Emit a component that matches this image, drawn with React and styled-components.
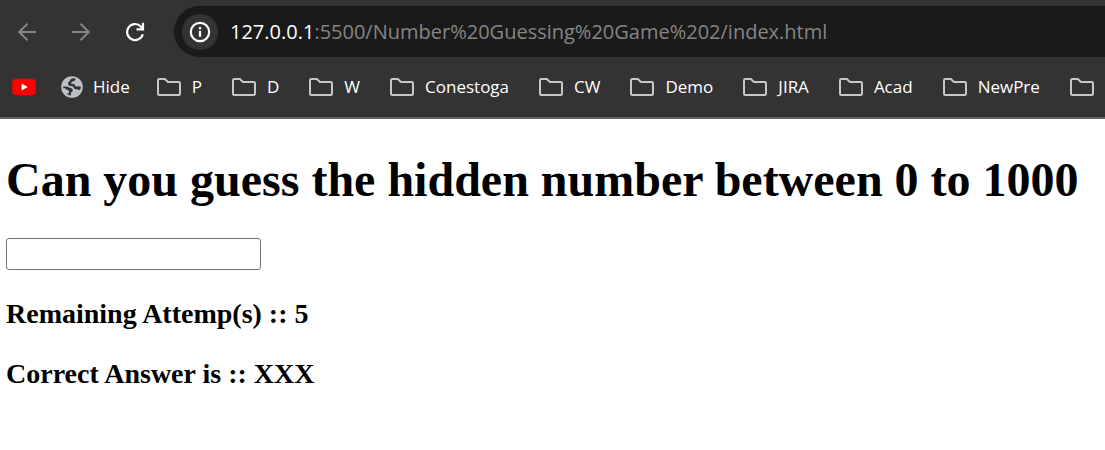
import React from "react";
import styled, { createGlobalStyle } from "styled-components";

const GlobalStyle = createGlobalStyle`
  * { box-sizing: border-box; }
  body { margin: 0; background: #fff; color: #000; overflow-x: hidden; }
`;

const Chrome = styled.header`
  background: #333333;
  border-bottom: 2px solid #656364;
  font-family: "Open Sans", "Noto Sans", sans-serif;
`;

const Toolbar = styled.div`
  display: flex;
  align-items: center;
  padding: 6px 0 0 12px;
`;

const NavButtons = styled.nav`
  display: flex;
  gap: 24px;
  margin-right: 24px;
`;

const IconButton = styled.button`
  display: flex;
  align-items: center;
  justify-content: center;
  flex: none;
  width: 30px;
  height: 30px;
  padding: 0;
  border: 0;
  background: none;
  color: ${(p) => (p.$dim ? "#868686" : "#ffffff")};
`;

const AddressBar = styled.div`
  display: flex;
  align-items: center;
  gap: 12px;
  flex: 1;
  min-width: 0;
  height: 51px;
  padding-left: 8px;
  border-radius: 26px 0 0 26px;
  background: #1a1a1a;
`;

const SiteInfo = styled(IconButton)`
  width: 36px;
  height: 36px;
  border-radius: 50%;
  background: #333333;
`;

const Url = styled.div`
  flex: 1;
  overflow: hidden;
  white-space: nowrap;
  font-size: 20px;
  line-height: 28px;
  color: #858585;
`;

const Host = styled.span`
  color: #ffffff;
`;

const Bookmarks = styled.nav`
  display: flex;
  align-items: center;
  gap: 27px;
  height: 60px;
  padding-left: 12px;
  overflow: hidden;
`;

const BookmarkGroup = styled.div`
  display: flex;
  align-items: center;
  flex: none;
  gap: ${(p) => p.$gap}px;
`;

const Bookmark = styled.a`
  display: flex;
  align-items: center;
  flex: none;
  gap: ${(p) => (p.$folder ? 11 : 10)}px;
  color: ${(p) => p.$color || "#ffffff"};
  font-size: 17px;
  line-height: 24px;
  text-decoration: none;
`;

const Page = styled.main`
  padding: 33px 6px 0;
  font-family: "Liberation Serif", "Times New Roman", serif;
`;

const Title = styled.h1`
  margin: 0 0 31px;
  font-size: 48px;
  line-height: 55px;
`;

const GuessInput = styled.input`
  display: block;
  width: 255px;
  height: 32px;
  padding: 2px 4px;
  border: 1px solid #767676;
  border-radius: 3px;
  background: #fff;
  font: 20px "Liberation Sans", Arial, sans-serif;
`;

const Status = styled.h3`
  margin: 28px 0 0;
  font-size: 28px;
  line-height: 32px;
`;

const BackIcon = () => (
  <svg width="20" height="20" viewBox="0 0 20 20" fill="none" stroke="currentColor" strokeWidth="2">
    <path d="M19 10H2.5M10.5 1.7L2.2 10l8.3 8.3" />
  </svg>
);

const ForwardIcon = () => (
  <svg width="20" height="20" viewBox="0 0 20 20" fill="none" stroke="currentColor" strokeWidth="2">
    <path d="M1 10h16.5M9.5 1.7L17.8 10l-8.3 8.3" />
  </svg>
);

const ReloadIcon = () => (
  <svg width="20" height="20" viewBox="0 0 20 20" fill="none" stroke="currentColor" strokeWidth="2.2">
    <path d="M17.8 12.2A8 8 0 1 1 15.8 4.4L18 6.8" />
    <path d="M18 .8V7.3H11.5" />
  </svg>
);

const InfoIcon = () => (
  <svg width="22" height="22" viewBox="0 0 22 22" fill="none" stroke="currentColor">
    <circle cx="11" cy="11" r="9.2" strokeWidth="2.2" />
    <path d="M11 9.8v6M11 6v2.2" strokeWidth="2.2" />
  </svg>
);

const YouTubeIcon = () => (
  <svg width="24" height="18" viewBox="0 0 24 18">
    <path
      d="M3.5 1Q12 .1 20.5 1Q23.3 1.2 23.6 4Q24.2 9 23.6 14Q23.3 16.8 20.5 17Q12 17.9 3.5 17Q.7 16.8 .4 14Q-.2 9 .4 4Q.7 1.2 3.5 1z"
      fill="#ff0000"
    />
    <path d="M9.6 5.4v7.2L15.8 9z" fill="#fff" />
  </svg>
);

const GlobeIcon = () => (
  <svg width="22" height="22" viewBox="0 0 22 22">
    <circle cx="11" cy="11" r="10.8" fill="#bdc1c6" />
    <path
      d="M14.6 2.6C14.6 5 13 5.4 11.2 5.4C10.6 5.4 10.7 7.3 9.6 7.5C10.6 8 13.6 7.6 14 9.2C14.3 10.8 16 10.4 17 10.2C18 10 19 10.4 19.8 10.6C19.8 12 19.4 13.200 19 14C17.500 13.200 15.500 14 13.800 13C12.300 12.100 12.800 10.500 11.400 10.200C9.400 10 7 10 7 7.500C7 5.500 8.500 5.800 9 4.400C9.500 2.900 11 2.200 12.500 2.300z"
      fill="#333333"
    />
    <path
      d="M2.200 10.400C4 10.600 6 10 7.800 11.200C9.200 12.200 11.800 12 11.800 14.200C11.800 16 10 15.600 10 17V19.600C7.800 19.400 6.400 18.600 5.600 17.800C7.600 18 8.400 17 8 15.200C7.600 13.600 5.400 14.200 4.600 12.800C4 12 3 12.400 2.400 12.400z"
      fill="#333333"
    />
  </svg>
);

const FolderIcon = () => (
  <svg width="24" height="18" viewBox="0 0 24 18" fill="none" stroke="#c7c7c7" strokeWidth="2">
    <path d="M1 2.2Q1 1 2.2 1H7.8L11 4H21.8Q23 4 23 5.2V15.8Q23 17 21.8 17H2.2Q1 17 1 15.8z" />
  </svg>
);

const folders = ["P", "D", "W", "Conestoga", "CW", "Demo", "JIRA", "Acad", "NewPre"];

export default function App() {
  return (
    <>
      <GlobalStyle />
      <Chrome>
        <Toolbar>
          <NavButtons aria-label="Navigation">
            <IconButton $dim aria-label="Back"><BackIcon /></IconButton>
            <IconButton $dim aria-label="Forward"><ForwardIcon /></IconButton>
            <IconButton aria-label="Reload"><ReloadIcon /></IconButton>
          </NavButtons>
          <AddressBar>
            <SiteInfo aria-label="View site information"><InfoIcon /></SiteInfo>
            <Url>
              <Host>127.0.0.1</Host>:5500/Number%20Guessing%20Game%202/index.html
            </Url>
          </AddressBar>
        </Toolbar>
        <Bookmarks aria-label="Bookmarks">
          <BookmarkGroup $gap={25}>
            <Bookmark href="#youtube" aria-label="YouTube"><YouTubeIcon /></Bookmark>
            <Bookmark href="#hide"><GlobeIcon />Hide</Bookmark>
          </BookmarkGroup>
          <BookmarkGroup $gap={30}>
            {folders.map((name) => (
              <Bookmark key={name} $folder href={`#${name}`}><FolderIcon />{name}</Bookmark>
            ))}
            <Bookmark $folder href="#c" $color="#4a90e2"><FolderIcon />C</Bookmark>
          </BookmarkGroup>
        </Bookmarks>
      </Chrome>
      <Page>
        <Title>Can you guess the hidden number between 0 to 1000</Title>
        <GuessInput type="text" aria-label="Your guess" />
        <Status>Remaining Attemp(s) :: 5</Status>
        <Status>Correct Answer is :: XXX</Status>
      </Page>
    </>
  );
}
